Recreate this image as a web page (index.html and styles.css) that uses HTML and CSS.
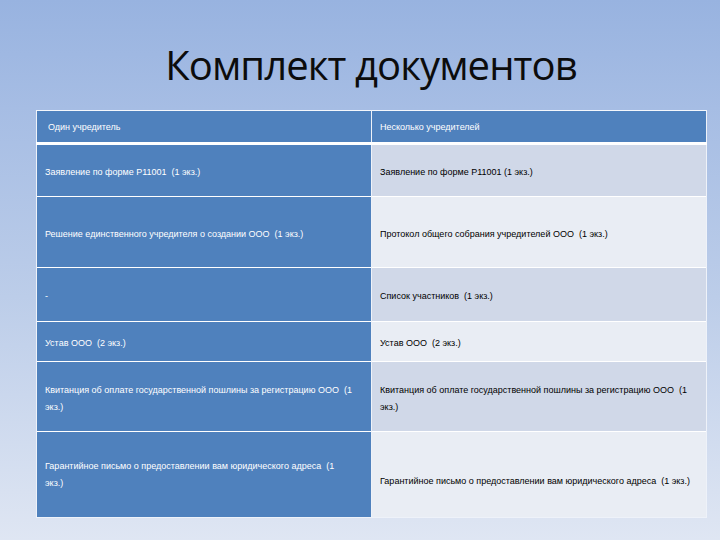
FILE: index.html
```html
<!DOCTYPE html>
<html lang="ru">
<head>
<meta charset="utf-8">
<title>Комплект документов</title>
<link rel="stylesheet" href="styles.css">
</head>
<body>
<div class="slide">
  <h1 class="title">Комплект документов</h1>
  <table class="docs">
    <colgroup>
      <col class="col-left">
      <col class="col-right">
    </colgroup>
    <thead>
      <tr class="r-head">
        <th class="c-left"><span class="hl">Один учредитель</span></th>
        <th class="c-right">Несколько учредителей</th>
      </tr>
    </thead>
    <tbody>
      <tr class="r1">
        <td class="c-left">Заявление по форме Р11001  (1 экз.)</td>
        <td class="c-right dark">Заявление по форме Р11001 (1 экз.)</td>
      </tr>
      <tr class="r2">
        <td class="c-left">Решение единственного учредителя о создании ООО  (1 экз.)</td>
        <td class="c-right light">Протокол общего собрания учредителей ООО  (1 экз.)</td>
      </tr>
      <tr class="r3">
        <td class="c-left">-</td>
        <td class="c-right dark">Список участников  (1 экз.)</td>
      </tr>
      <tr class="r4">
        <td class="c-left">Устав ООО  (2 экз.)</td>
        <td class="c-right light">Устав ООО  (2 экз.)</td>
      </tr>
      <tr class="r5">
        <td class="c-left">Квитанция об оплате государственной пошлины за регистрацию ООО  (1<br>экз.)</td>
        <td class="c-right dark">Квитанция об оплате государственной пошлины за регистрацию ООО  (1<br>экз.)</td>
      </tr>
      <tr class="r6">
        <td class="c-left">Гарантийное письмо о предоставлении вам юридического адреса  (1<br>экз.)</td>
        <td class="c-right light nowrap">Гарантийное письмо о предоставлении вам юридического адреса  (1 экз.)</td>
      </tr>
    </tbody>
  </table>
</div>
</body>
</html>
```

FILE: styles.css
```css
html, body {
  margin: 0;
  padding: 0;
}

body {
  width: 720px;
  height: 540px;
  overflow: hidden;
  background: linear-gradient(to bottom, #98b3e0 0%, #a6bde4 20%, #bccde9 55%, #dfe6f3 100%);
  font-family: "Liberation Sans", Arial, sans-serif;
}

.slide {
  padding-top: 40px;
}

.title {
  margin: 0 0 20px 0;
  height: 50px;
  font-family: "Open Sans", "Noto Sans", sans-serif;
  font-weight: 400;
  font-size: 40px;
  line-height: 50px;
  letter-spacing: -0.9px;
  text-align: center;
  color: #0c0c0c;
  padding-left: 22px;
}

.docs {
  margin-left: 36px;
  width: 670px;
  border-collapse: collapse;
  table-layout: fixed;
  font-size: 9px;
  line-height: 17px;
  white-space: pre-wrap;
}

.col-left { width: 335px; }
.col-right { width: 335px; }

.docs th,
.docs td {
  padding: 4px 2px 0 8px;
  vertical-align: middle;
  text-align: left;
  font-weight: 400;
  border-top: 1px solid #ffffff;
  border-left: 1px solid #eef2f9;
  border-right: 1px solid #eef2f9;
}

.docs .c-left {
  background: #4f81bd;
  color: #ffffff;
}

.docs .c-right {
  color: #000000;
}

.docs th.c-right {
  background: #4f81bd;
  color: #ffffff;
}

.docs .dark {
  background: #d0d8e8;
}

.docs .light {
  background: #e9edf4;
}

.nowrap {
  white-space: pre;
}

.hl {
  padding-left: 3px;
}

.r-head th { height: 29px; padding-top: 2px; border-top: 1px solid #f4f7fc; }
.r1 td { height: 47px; border-top: 3px solid #ffffff; }
.r2 td { height: 66px; }
.r3 td { height: 49px; }
.r4 td { height: 35px; }
.r5 td { height: 65px; }
.r6 td { border-bottom: 1px solid #eef2f9; }
.r6 td.c-left { padding-top: 0; height: 85px; }
.r6 td.c-right { padding-top: 14px; height: 71px; }
```
